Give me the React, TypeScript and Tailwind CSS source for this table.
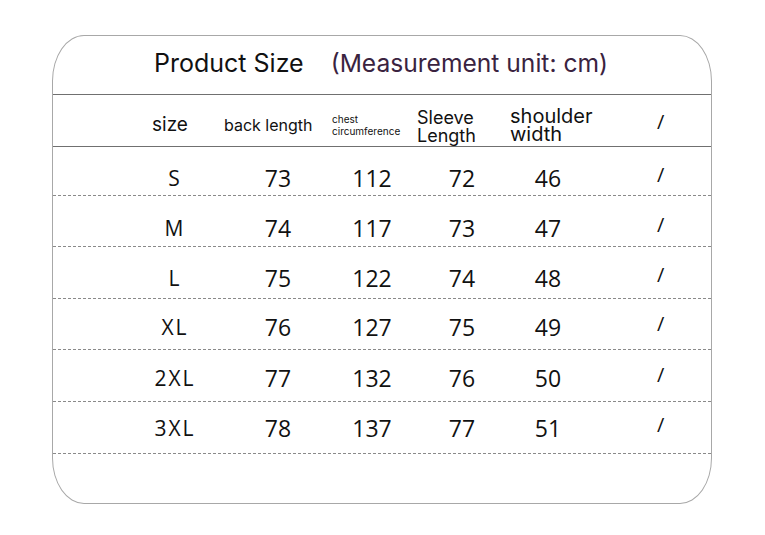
import React from "react";

const rows = [
  ["S", "73", "112", "72", "46"],
  ["M", "74", "117", "73", "47"],
  ["L", "75", "122", "74", "48"],
  ["XL", "76", "127", "75", "49"],
  ["2XL", "77", "132", "76", "50"],
  ["3XL", "78", "137", "77", "51"],
];
const rowCls = [
  "h-[49px] pt-[15px]",
  "h-[51px] pt-[15px]",
  "h-[52px] pt-[12px]",
  "h-[51px] pt-[7px]",
  "h-[52px] pt-[6px]",
  "h-[52px] pt-[2px]",
];

const grid = "grid grid-cols-[102px_104px_84px_96px_76px_125px] pl-[71px]";
const head = "font-['Inter',sans-serif] text-[#111]";
const data = "font-['Open_Sans',sans-serif] text-[#111]";

export default function App() {
  return (
    <div className="w-[765px] h-[535px] bg-white pt-[35px] pl-[52px]">
      <div className="w-[660px] h-[469px] border border-[#a8a8a8] rounded-[32px/46px] overflow-hidden flex flex-col">
        <div className={`h-[59px] border-b border-[#707070] flex items-center pl-[101px] gap-[27px] pb-[3px] ${head}`}>
          <span className="text-[25px]">Product Size</span>
          <span className="text-[24.6px] text-[#3a2340]">(Measurement unit: cm)</span>
        </div>
        <div className={`${grid} h-[52px] border-b border-[#707070] items-center pt-[8px] ${head}`}>
          <div className="pl-[28px] text-[19px] leading-none">size</div>
          <div className="-ml-[2px] text-[16px] leading-none whitespace-nowrap">back length</div>
          <div className="pl-[2px] text-[10px] leading-[12px] whitespace-nowrap">chest<br />circumference</div>
          <div className="pl-[3px] text-[18px] leading-[18px] pt-[5px]">Sleeve<br />Length</div>
          <div className="text-[20px] leading-[18px] pt-[1px] whitespace-nowrap">shoulder<br />width</div>
          <div className={`pl-[71px] text-[20px] leading-none -mt-[6px] ${data}`}>/</div>
        </div>
        {rows.map((r, i) => (
          <div key={r[0]} className={`${grid} ${rowCls[i]} border-b border-dashed border-[#8a8a8a] items-center ${data}`}>
            <div className="text-center text-[21px] tracking-[2px] leading-none">{r[0]}</div>
            <div className="text-center text-[23px] leading-none">{r[1]}</div>
            <div className="text-center text-[23px] leading-none">{r[2]}</div>
            <div className="text-center text-[23px] leading-none">{r[3]}</div>
            <div className="text-center text-[23px] leading-none">{r[4]}</div>
            <div className="pl-[71px] text-[20px] leading-none -mt-[8px]">/</div>
          </div>
        ))}
      </div>
    </div>
  );
}
